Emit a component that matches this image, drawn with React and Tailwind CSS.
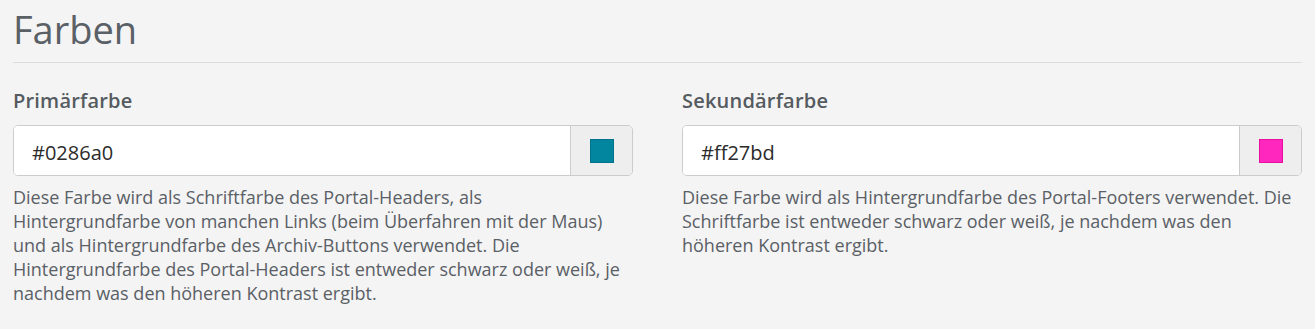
import React from 'react'

const fields = [
  {
    label: 'Primärfarbe',
    value: '#0286a0',
    swatch: 'bg-[#0286a0] border-[#02728a]',
    help: 'Diese Farbe wird als Schriftfarbe des Portal-Headers, als Hintergrundfarbe von manchen Links (beim Überfahren mit der Maus) und als Hintergrundfarbe des Archiv-Buttons verwendet. Die Hintergrundfarbe des Portal-Headers ist entweder schwarz oder weiß, je nachdem was den höheren Kontrast ergibt.'
  },
  {
    label: 'Sekundärfarbe',
    value: '#ff27bd',
    swatch: 'bg-[#ff27bd] border-[#e8109f]',
    help: 'Diese Farbe wird als Hintergrundfarbe des Portal-Footers verwendet. Die Schriftfarbe ist entweder schwarz oder weiß, je nachdem was den höheren Kontrast ergibt.'
  }
]

const ColorField = ({ field }) => (
  <div>
    <label className="block text-[20px] font-semibold text-[#555b60] leading-[26px] mb-[11px] tracking-[0.2px]">
      {field.label}
    </label>
    <div className="flex h-[51px] border border-[#cccccc] rounded-[5px] overflow-hidden bg-white">
      <input
        readOnly
        value={field.value}
        className="flex-1 min-w-0 pl-[18px] pr-3 pt-[5px] text-[20px] text-[#2b2b2b] bg-white outline-none"
        style={{ fontFamily: '"Open Sans", sans-serif' }}
      />
      <div className="w-[62px] flex items-center justify-center bg-[#eeeeee] border-l border-[#cccccc]">
        <div className={`w-6 h-6 border ${field.swatch}`}></div>
      </div>
    </div>
    <p className="mt-[9px] text-[18px] leading-[24px] text-[#5a6066]">{field.help}</p>
  </div>
)

const App = () => {
  return (
    <div className="min-h-screen bg-[#f4f4f4] px-[13px] pt-[4px]" style={{ fontFamily: '"Open Sans", sans-serif' }}>
      <h2 className="text-[38px] leading-[50px] text-[#5a6066] font-normal pb-[8px] border-b border-[#dddddd]">
        Farben
      </h2>
      <div className="grid grid-cols-2 gap-[49px] pt-[25px]">
        <ColorField field={fields[0]} />
        <ColorField field={fields[1]} />
      </div>
    </div>
  )
}

export default App
